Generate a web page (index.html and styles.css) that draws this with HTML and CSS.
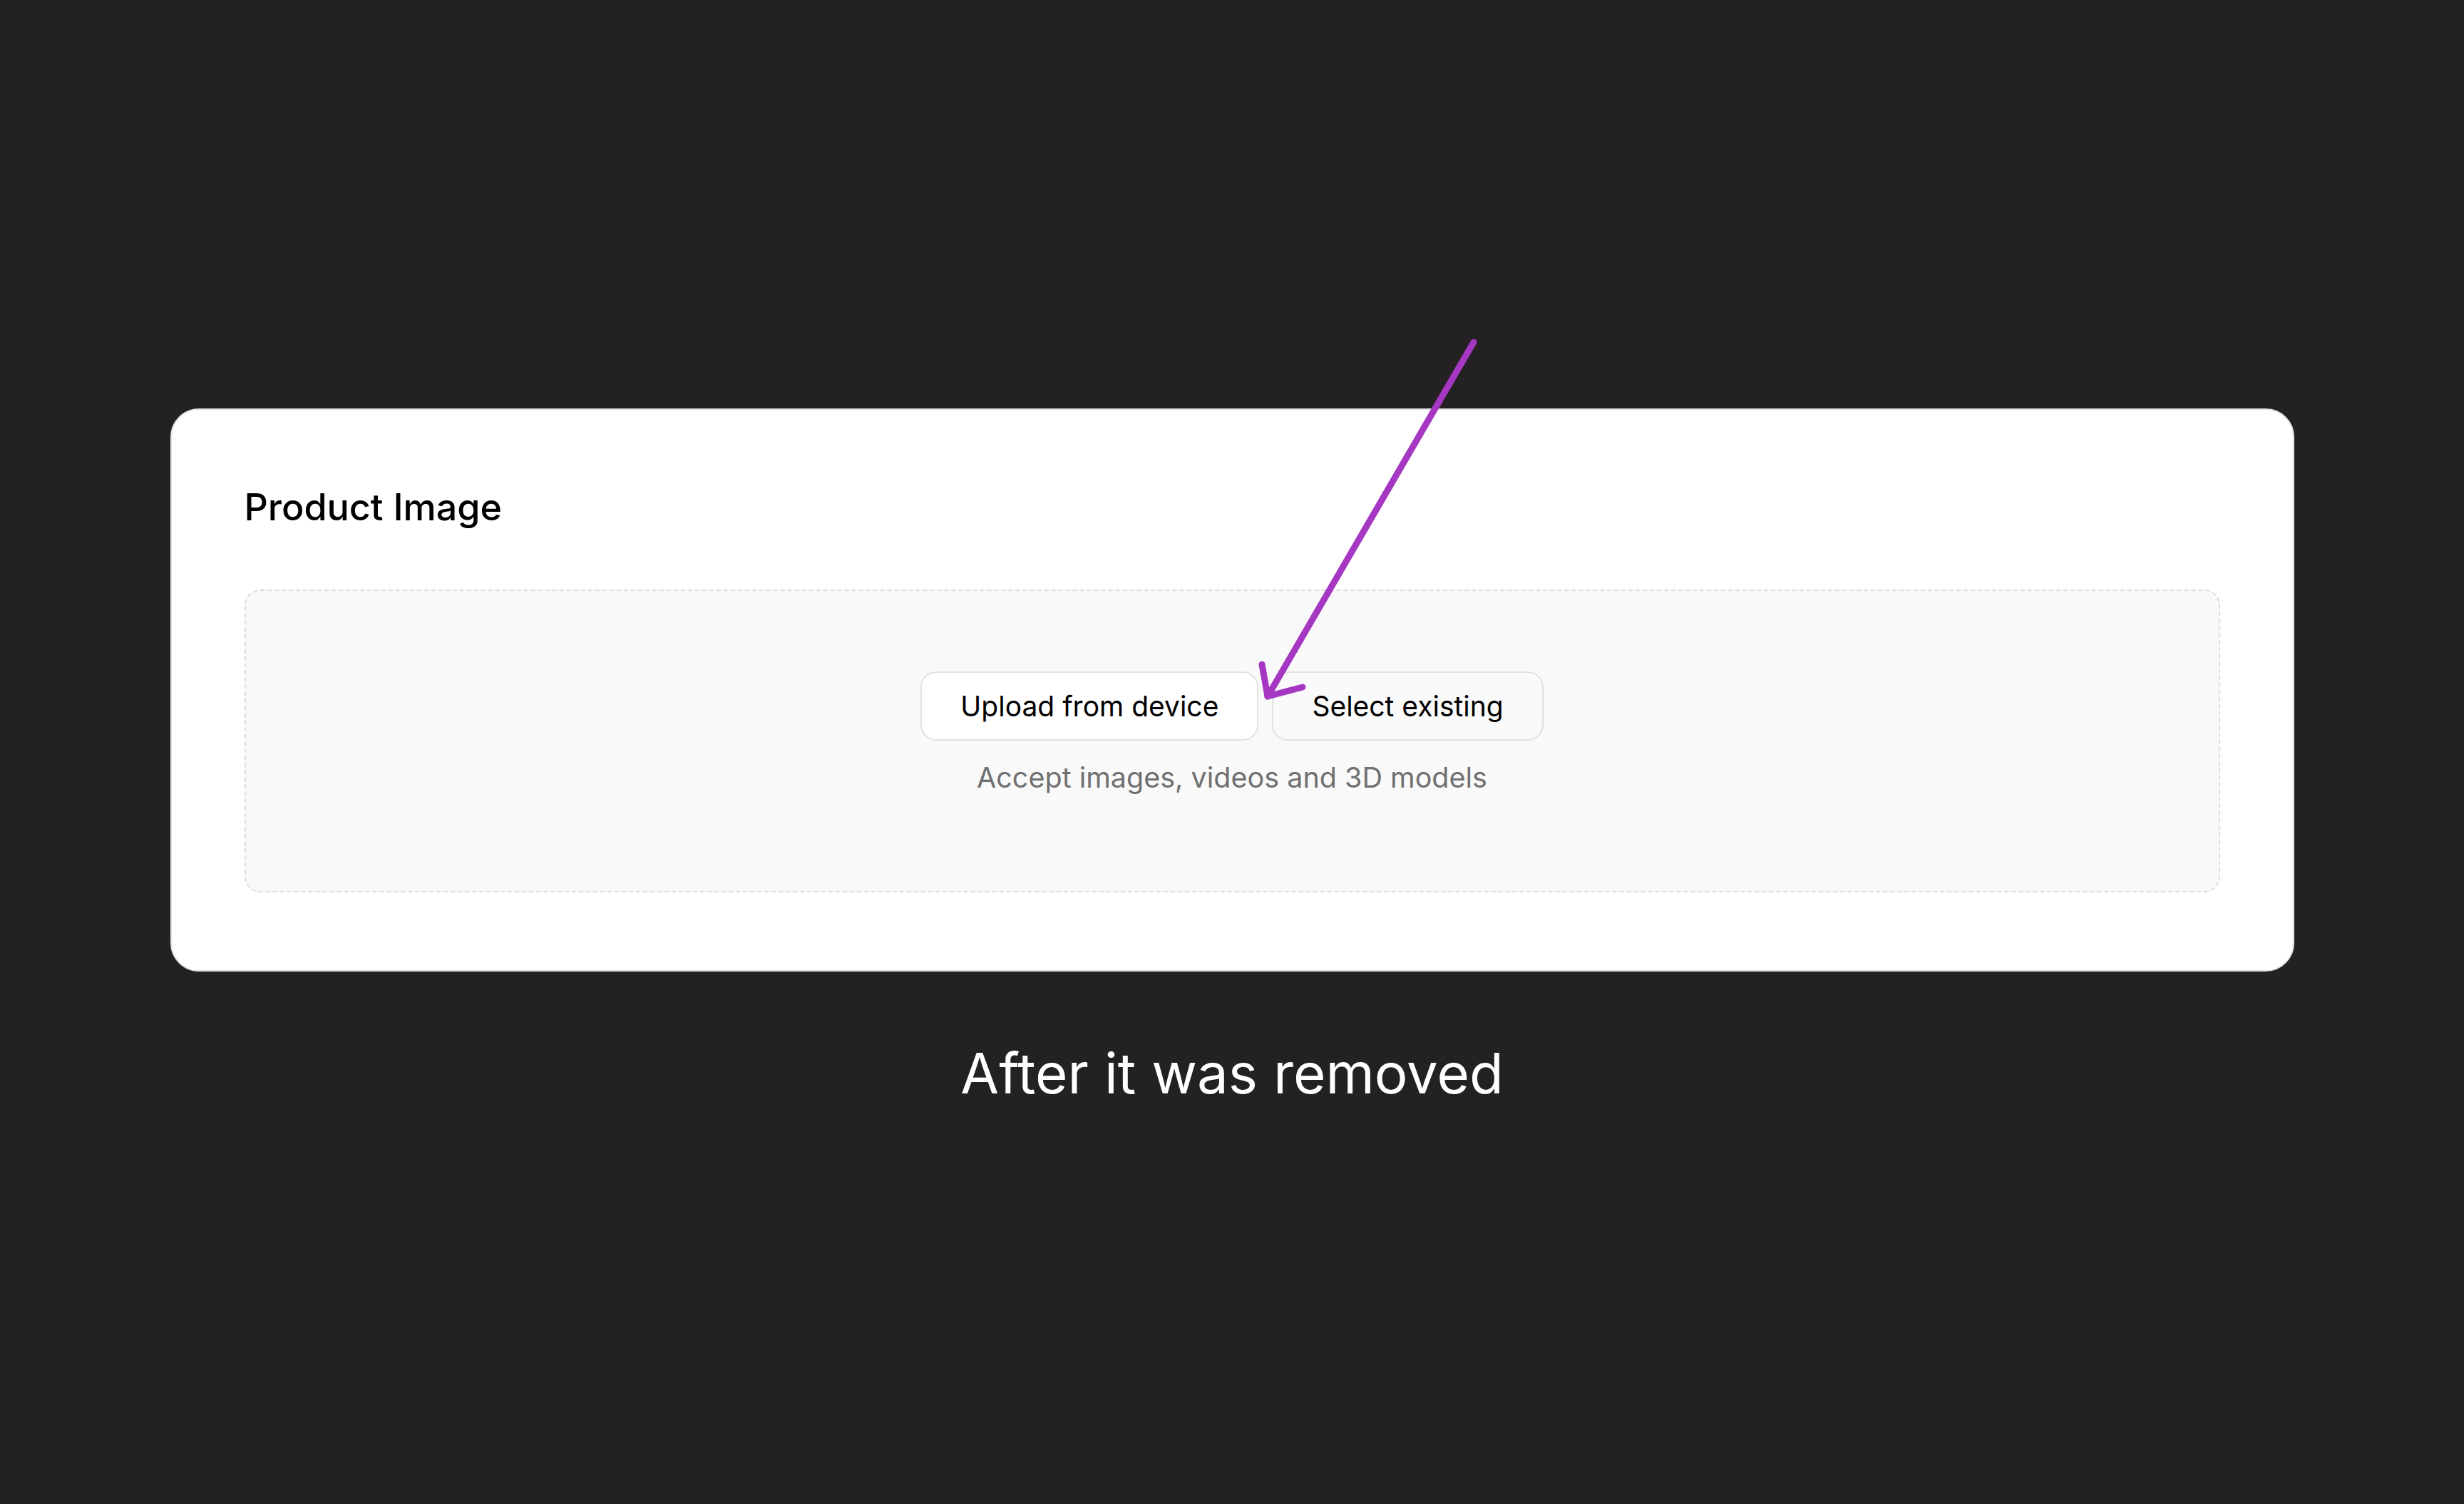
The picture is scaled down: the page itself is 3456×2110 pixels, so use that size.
FILE: index.html
```html
<!DOCTYPE html>
<html lang="en">
<head>
<meta charset="UTF-8">
<meta name="viewport" content="width=device-width, initial-scale=1.0">
<title>Product Image</title>
<link rel="stylesheet" href="styles.css">
</head>
<body>
<div class="page">
  <!-- Media card -->
  <div class="card">
    <h2 class="card-title">Product Image</h2>
    <div class="dropzone">
      <div class="dropzone-actions">
        <button type="button" class="btn btn-primary">Upload from device</button>
        <button type="button" class="btn btn-ghost">Select existing</button>
      </div>
      <p class="dropzone-hint">Accept images, videos and 3D models</p>
    </div>
  </div>

  <p class="caption">After it was removed</p>

  <!-- Annotation arrow -->
  <svg class="annotation" width="340" height="540" viewBox="0 0 340 540">
    <path d="M317 20 L28 517" fill="none" stroke="#a537c3" stroke-width="9" stroke-linecap="round"/>
    <path d="M20 472 L28 517 L77 504" fill="none" stroke="#a537c3" stroke-width="9" stroke-linecap="round" stroke-linejoin="round"/>
  </svg>
</div>
</body>
</html>
```

FILE: styles.css
```css
body {
  margin: 0;
  background-color: #232122;
  font-family: Inter, "Noto Sans", sans-serif;
}
.page {
  position: relative;
  min-height: 2110px;
  padding-top: 573px;
  box-sizing: border-box;
}
.card {
  width: 2979px;
  margin: 0 auto;
  box-sizing: border-box;
  padding: 106px 102px 109px;
  background: #ffffff;
  border: 2px solid #e2e2e2;
  border-radius: 40px;
}
.card-title {
  margin: 0 0 84px;
  font-size: 52px;
  line-height: 62px;
  font-weight: 500;
  color: #000000;
}
.dropzone {
  padding: 113px 0 136px;
  background: #f9f9f9;
  border: 2px dashed #dddddd;
  border-radius: 22px;
  text-align: center;
}
.dropzone-actions {
  display: flex;
  justify-content: center;
  gap: 19px;
}
.btn {
  height: 97px;
  padding: 0 54px;
  font-family: inherit;
  font-size: 39px;
  color: #000000;
  border: 2px solid #e2e2e2;
  border-radius: 22px;
  cursor: pointer;
}
.btn-primary {
  background: #ffffff;
}
.btn-ghost {
  background: #fafafa;
}
.dropzone-hint {
  margin: 29px 0 0;
  font-size: 39.5px;
  line-height: 46px;
  color: #707070;
}
.caption {
  margin: 96px 0 0;
  text-align: center;
  font-size: 78px;
  line-height: 94px;
  color: #ffffff;
}
.annotation {
  position: absolute;
  left: 1750px;
  top: 460px;
  pointer-events: none;
}
```
